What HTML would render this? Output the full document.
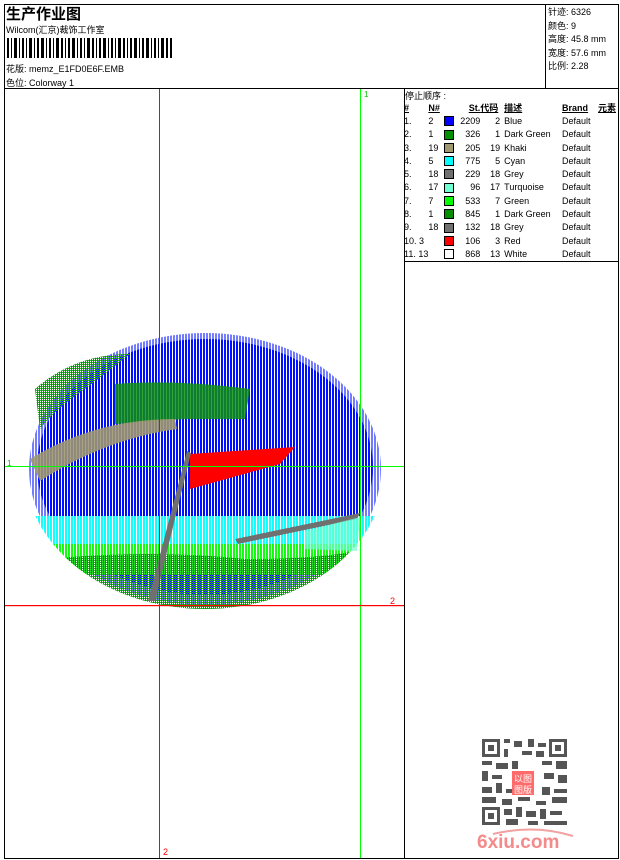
<!DOCTYPE html>
<html><head><meta charset="utf-8"><style>
*{margin:0;padding:0;box-sizing:border-box}
body{width:620px;height:860px;background:#fff;position:relative;overflow:hidden;font-family:"Liberation Sans","Noto Sans CJK SC",sans-serif;font-size:9px;color:#000}
.a{position:absolute;white-space:nowrap}
.l{position:absolute;background:#000}
table{border-collapse:collapse}
td{font-size:9px;height:13.3px;padding:0;white-space:nowrap}
.sw{display:inline-block;width:10px;height:10px;border:1px solid #000;vertical-align:middle}
</style></head><body>
<div class="l" style="left:4px;top:4px;width:615px;height:1px"></div>
<div class="l" style="left:4px;top:858px;width:615px;height:1px"></div>
<div class="l" style="left:4px;top:4px;width:1px;height:855px"></div>
<div class="l" style="left:618px;top:4px;width:1px;height:855px"></div>
<div class="l" style="left:4px;top:88px;width:615px;height:1px"></div>
<div class="l" style="left:545px;top:4px;width:1px;height:84px"></div>
<div class="l" style="left:404px;top:88px;width:1px;height:771px"></div>
<div class="l" style="left:404px;top:261px;width:215px;height:1px"></div>

<div class="a" style="left:6px;top:3px;font-size:15px;font-weight:bold">生产作业图</div>
<div class="a" style="left:6px;top:23px">Wilcom(汇京)裁饰工作室</div>
<svg class="a" style="left:7px;top:38px" width="166" height="20">
<g fill="#000">
<rect x="0" width="2" height="20"/><rect x="4" width="1" height="20"/><rect x="7" width="3" height="20"/><rect x="12" width="1" height="20"/><rect x="15" width="2" height="20"/><rect x="19" width="1" height="20"/><rect x="22" width="3" height="20"/><rect x="27" width="1" height="20"/><rect x="30" width="2" height="20"/><rect x="34" width="3" height="20"/><rect x="39" width="1" height="20"/><rect x="42" width="2" height="20"/><rect x="46" width="1" height="20"/><rect x="49" width="3" height="20"/><rect x="54" width="2" height="20"/><rect x="58" width="1" height="20"/><rect x="61" width="2" height="20"/><rect x="65" width="3" height="20"/><rect x="70" width="1" height="20"/><rect x="73" width="2" height="20"/><rect x="77" width="1" height="20"/><rect x="80" width="3" height="20"/><rect x="85" width="2" height="20"/><rect x="89" width="1" height="20"/><rect x="92" width="2" height="20"/><rect x="96" width="3" height="20"/><rect x="101" width="1" height="20"/><rect x="104" width="2" height="20"/><rect x="108" width="1" height="20"/><rect x="111" width="3" height="20"/><rect x="116" width="2" height="20"/><rect x="120" width="1" height="20"/><rect x="123" width="2" height="20"/><rect x="127" width="3" height="20"/><rect x="132" width="1" height="20"/><rect x="135" width="2" height="20"/><rect x="139" width="3" height="20"/><rect x="144" width="1" height="20"/><rect x="147" width="2" height="20"/><rect x="151" width="1" height="20"/><rect x="154" width="3" height="20"/><rect x="159" width="2" height="20"/><rect x="163" width="2" height="20"/>
</g></svg>
<div class="a" style="left:6px;top:62px">花版: memz_E1FD0E6F.EMB</div>
<div class="a" style="left:6px;top:76px">色位: Colorway 1</div>

<div class="a" style="left:548px;top:6px;line-height:13.5px">针迹: 6326<br>颜色: 9<br>高度: 45.8 mm<br>宽度: 57.6 mm<br>比例: 2.28</div>

<div class="a" style="left:405px;top:89px">停止顺序 :</div>
<table class="a" style="left:404px;top:101px;width:212px">
<tr style="font-weight:bold;text-decoration:underline"><td style="width:18px">#</td><td style="width:16px">N#</td><td style="width:16px"></td><td style="width:20px;text-align:right">St.</td><td style="width:24px">代码</td><td style="width:58px">描述</td><td style="width:36px">Brand</td><td>元素</td></tr>
<tr><td>1.</td><td>2</td><td><span class="sw" style="background:#0000ff"></span></td><td style="text-align:right">2209</td><td style="text-align:right;padding-right:4px">2</td><td>Blue</td><td>Default</td><td></td></tr>
<tr><td>2.</td><td>1</td><td><span class="sw" style="background:#009000"></span></td><td style="text-align:right">326</td><td style="text-align:right;padding-right:4px">1</td><td>Dark Green</td><td>Default</td><td></td></tr>
<tr><td>3.</td><td>19</td><td><span class="sw" style="background:#a09870"></span></td><td style="text-align:right">205</td><td style="text-align:right;padding-right:4px">19</td><td>Khaki</td><td>Default</td><td></td></tr>
<tr><td>4.</td><td>5</td><td><span class="sw" style="background:#00ffff"></span></td><td style="text-align:right">775</td><td style="text-align:right;padding-right:4px">5</td><td>Cyan</td><td>Default</td><td></td></tr>
<tr><td>5.</td><td>18</td><td><span class="sw" style="background:#707070"></span></td><td style="text-align:right">229</td><td style="text-align:right;padding-right:4px">18</td><td>Grey</td><td>Default</td><td></td></tr>
<tr><td>6.</td><td>17</td><td><span class="sw" style="background:#70ffd0"></span></td><td style="text-align:right">96</td><td style="text-align:right;padding-right:4px">17</td><td>Turquoise</td><td>Default</td><td></td></tr>
<tr><td>7.</td><td>7</td><td><span class="sw" style="background:#00ff00"></span></td><td style="text-align:right">533</td><td style="text-align:right;padding-right:4px">7</td><td>Green</td><td>Default</td><td></td></tr>
<tr><td>8.</td><td>1</td><td><span class="sw" style="background:#009000"></span></td><td style="text-align:right">845</td><td style="text-align:right;padding-right:4px">1</td><td>Dark Green</td><td>Default</td><td></td></tr>
<tr><td>9.</td><td>18</td><td><span class="sw" style="background:#707070"></span></td><td style="text-align:right">132</td><td style="text-align:right;padding-right:4px">18</td><td>Grey</td><td>Default</td><td></td></tr>
<tr><td>10. 3</td><td></td><td><span class="sw" style="background:#ff0000"></span></td><td style="text-align:right">106</td><td style="text-align:right;padding-right:4px">3</td><td>Red</td><td>Default</td><td></td></tr>
<tr><td>11. 13</td><td></td><td><span class="sw" style="background:#fff"></span></td><td style="text-align:right">868</td><td style="text-align:right;padding-right:4px">13</td><td>White</td><td>Default</td><td></td></tr>
</table>

<svg class="a" style="left:5px;top:89px" width="399" height="769">
<defs>
<pattern id="st" width="3" height="4" patternUnits="userSpaceOnUse"><rect width="2" height="4" fill="#0010ff"/></pattern>
<pattern id="cy" width="3" height="4" patternUnits="userSpaceOnUse"><rect width="2" height="4" fill="#10ffff"/></pattern>
<pattern id="gr" width="3" height="3" patternUnits="userSpaceOnUse"><rect width="2" height="3" fill="#10ff10"/></pattern>
<pattern id="dg" width="2" height="2" patternUnits="userSpaceOnUse"><rect width="1" height="2" fill="#109010"/><rect x="1" y="1" width="1" height="1" fill="#30b030"/></pattern>
<clipPath id="el"><ellipse cx="200" cy="380" rx="180" ry="140"/></clipPath>
</defs>
<ellipse cx="200" cy="380" rx="176" ry="136" fill="url(#st)" opacity="0.55"/>
<ellipse cx="200" cy="378" rx="168" ry="128" fill="url(#st)"/>
<g clip-path="url(#el)">
<rect x="0" y="427" width="399" height="30" fill="url(#cy)"/>
<rect x="0" y="455" width="399" height="30" fill="url(#gr)"/>
<path d="M40 470 Q150 460 240 470 Q320 470 360 460 L360 530 L40 530Z" fill="url(#dg)"/>
</g>
<path d="M30 300 Q70 265 125 265 Q100 285 80 300 Q50 320 35 340Z" fill="url(#dg)"/>
<path d="M110 295 Q170 290 245 300 L240 330 L180 330 L110 335Z" fill="#109010" opacity="0.85"/>
<path d="M25 370 Q90 330 170 330 L172 340 Q100 350 35 392Z" fill="#a09870" opacity="0.9"/>
<path d="M185 365 L290 358 L275 375 L185 400Z" fill="#ff0000"/>
<path d="M182 362 L186 364 L150 512 L143 512Z" fill="#707070"/>
<path d="M230 450 L355 424 L352 430 L233 455Z" fill="#707070"/>
<path d="M300 442 L355 428 L352 462 L300 460Z" fill="#70ffd0" opacity="0.7"/>
<rect x="154" y="0" width="1" height="769" fill="#ff0000"/>
<rect x="355" y="0" width="1" height="769" fill="#00ff00"/>
<rect x="0" y="377" width="399" height="1" fill="#00ff00"/>
<rect x="0" y="516" width="399" height="1.2" fill="#ff0000"/>
<text x="359" y="8" font-size="8" fill="#00c000" font-family="Liberation Sans">1</text>
<text x="2" y="377" font-size="8" fill="#00c000" font-family="Liberation Sans">1</text>
<text x="385" y="515" font-size="9" fill="#ff0000" font-family="Liberation Sans">2</text>
<text x="158" y="766" font-size="9" fill="#ff0000" font-family="Liberation Sans">2</text>
</svg>

<svg class="a" style="left:482px;top:739px" width="85" height="86">
<rect width="85" height="86" fill="#fff"/>
<g fill="#555">
<rect x="0" y="0" width="18" height="18"/><rect x="67" y="0" width="18" height="18"/><rect x="0" y="68" width="18" height="18"/>
</g>
<g fill="#fff"><rect x="3" y="3" width="12" height="12"/><rect x="70" y="3" width="12" height="12"/><rect x="3" y="71" width="12" height="12"/></g>
<g fill="#555"><rect x="6" y="6" width="6" height="6"/><rect x="73" y="6" width="6" height="6"/><rect x="6" y="74" width="6" height="6"/>
<rect x="22" y="0" width="6" height="4"/><rect x="32" y="2" width="8" height="6"/><rect x="46" y="0" width="6" height="8"/><rect x="56" y="4" width="8" height="4"/>
<rect x="22" y="10" width="4" height="8"/><rect x="40" y="12" width="10" height="4"/><rect x="54" y="12" width="8" height="6"/>
<rect x="0" y="22" width="10" height="4"/><rect x="14" y="24" width="12" height="6"/><rect x="30" y="22" width="6" height="8"/><rect x="60" y="22" width="10" height="4"/><rect x="74" y="22" width="11" height="8"/>
<rect x="0" y="32" width="6" height="10"/><rect x="10" y="36" width="10" height="4"/><rect x="62" y="34" width="10" height="6"/><rect x="76" y="36" width="9" height="8"/>
<rect x="0" y="48" width="10" height="6"/><rect x="14" y="44" width="6" height="10"/><rect x="24" y="50" width="8" height="4"/><rect x="60" y="48" width="8" height="8"/><rect x="72" y="50" width="13" height="4"/>
<rect x="0" y="58" width="14" height="6"/><rect x="20" y="60" width="10" height="6"/><rect x="36" y="58" width="12" height="4"/><rect x="54" y="62" width="10" height="4"/><rect x="70" y="58" width="15" height="6"/>
<rect x="22" y="70" width="8" height="6"/><rect x="34" y="68" width="6" height="10"/><rect x="44" y="72" width="10" height="6"/><rect x="58" y="70" width="6" height="10"/><rect x="68" y="72" width="12" height="4"/>
<rect x="24" y="80" width="12" height="6"/><rect x="46" y="82" width="10" height="4"/><rect x="62" y="82" width="23" height="4"/>
</g>
<rect x="30" y="32" width="22" height="24" fill="#ff6b6b"/>
<text x="32" y="43" font-size="9" fill="#fff" font-family="Noto Sans CJK SC,sans-serif">以图</text>
<text x="32" y="54" font-size="9" fill="#fff" font-family="Noto Sans CJK SC,sans-serif">图版</text>
</svg>
<svg class="a" style="left:475px;top:826px" width="105" height="26">
<path d="M18 8 Q60 -2 98 10" stroke="#f3a0a0" stroke-width="2" fill="none"/>
<text x="2" y="22" font-size="19" font-weight="bold" fill="#f48a8a" font-family="Liberation Sans,sans-serif">6xiu.com</text>
</svg>
</body></html>
